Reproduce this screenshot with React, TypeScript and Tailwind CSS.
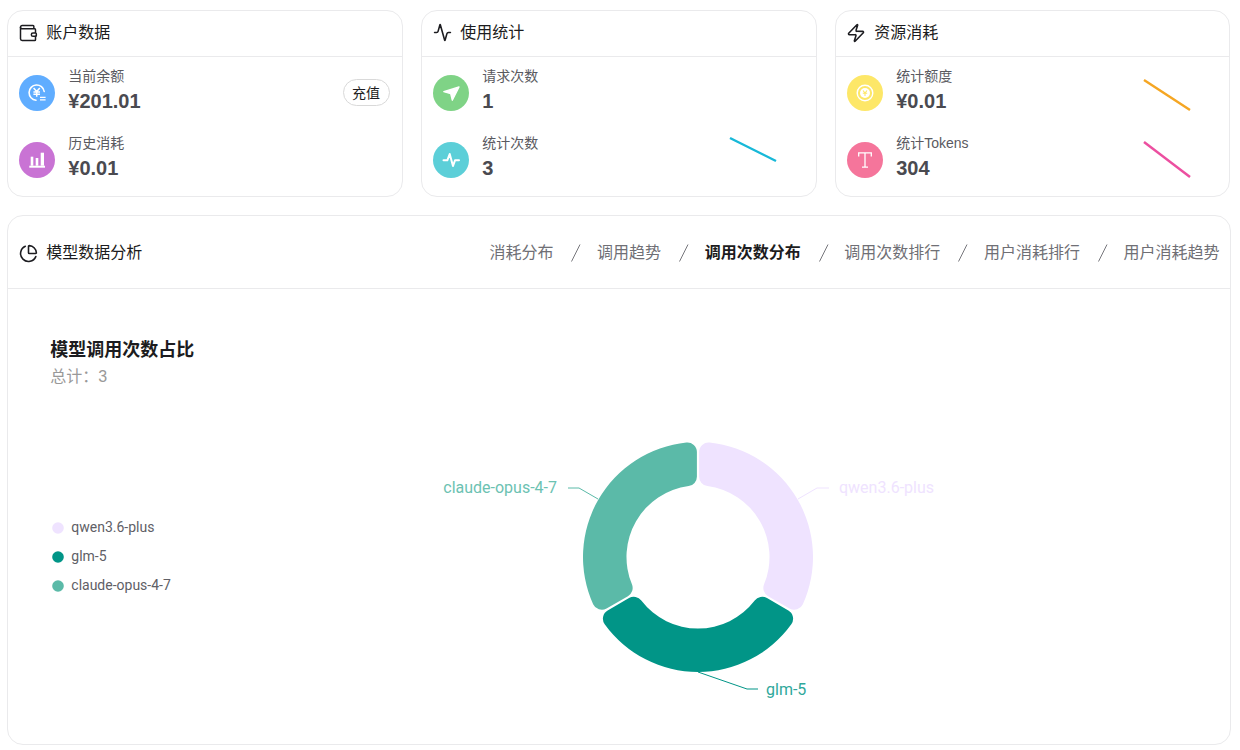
import { Activity, ChartPie, Wallet, Zap } from "lucide-react";
import type { ReactNode } from "react";

const CX = 230;
const CY = 142;
const OUTER = 115;
const INNER = 71.5;
const CORNER = 9.5;
const GAP = 1.1;

function polar(radius: number, angle: number) {
  return `${(CX + radius * Math.sin(angle)).toFixed(2)} ${(CY - radius * Math.cos(angle)).toFixed(2)}`;
}

function onEdge(along: number, angle: number, offset: number) {
  const x = CX + along * Math.sin(angle) + offset * Math.cos(angle);
  const y = CY - along * Math.cos(angle) + offset * Math.sin(angle);
  return `${x.toFixed(2)} ${y.toFixed(2)}`;
}

// rounded donut slice, angles in degrees clockwise from the top
function slice(from: number, to: number) {
  const a0 = (from * Math.PI) / 180;
  const a1 = (to * Math.PI) / 180;
  const po = OUTER - CORNER;
  const pi = INNER + CORNER;
  const dOut = Math.asin((CORNER + GAP) / po);
  const dIn = Math.asin((CORNER + GAP) / pi);
  const c = `A${CORNER} ${CORNER} 0 0 1`;
  return [
    `M${onEdge(po * Math.cos(dOut), a0, GAP)}`,
    `${c} ${polar(OUTER, a0 + dOut)}`,
    `A${OUTER} ${OUTER} 0 0 1 ${polar(OUTER, a1 - dOut)}`,
    `${c} ${onEdge(po * Math.cos(dOut), a1, -GAP)}`,
    `L${onEdge(pi * Math.cos(dIn), a1, -GAP)}`,
    `${c} ${polar(INNER, a1 - dIn)}`,
    `A${INNER} ${INNER} 0 0 0 ${polar(INNER, a0 + dIn)}`,
    `${c} ${onEdge(pi * Math.cos(dIn), a0, GAP)}`,
    "Z",
  ].join(" ");
}

const models = [
  { name: "qwen3.6-plus", color: "#efe3ff", from: 0, to: 120 },
  { name: "glm-5", color: "#019587", from: 120, to: 240 },
  { name: "claude-opus-4-7", color: "#5bbaa8", from: 240, to: 360 },
];

const tabs = ["消耗分布", "调用趋势", "调用次数分布", "调用次数排行", "用户消耗排行", "用户消耗趋势"];

function YuanSwapIcon() {
  return (
    <svg viewBox="0 0 20 20" className="w-[20px] h-[20px]" fill="none" stroke="white">
      <path d="M17.2 8.5A7.6 7.6 0 1 0 9 17.2" strokeWidth="1.6" strokeLinecap="round" />
      <path d="M6.6 5 9.7 8.6 12.8 5M6.4 9h6.6M6.4 11.3h6.6M9.7 8.6v5.2" strokeWidth="1.5" />
      <path d="M13 14.3h5.6M13 16.9h5.6" strokeWidth="1.3" />
    </svg>
  );
}

function BarsIcon() {
  return (
    <svg viewBox="0 0 20 20" className="w-[20px] h-[20px]" fill="white">
      <rect x="2.3" y="15.7" width="15.7" height="2" />
      <rect x="3.7" y="6.7" width="2.6" height="9" />
      <rect x="8.7" y="8" width="2.6" height="7.7" />
      <rect x="13.7" y="2.7" width="3.3" height="13" />
    </svg>
  );
}

function PlaneIcon() {
  return (
    <svg viewBox="0 0 20 20" className="w-[20px] h-[20px]" fill="white" stroke="white" strokeWidth="1.4" strokeLinejoin="round">
      <path d="M2.8 8.7 18 4 11.3 17.2 9.7 10.7Z" />
    </svg>
  );
}

function PulseIcon() {
  return (
    <svg viewBox="0 0 20 20" className="w-[20px] h-[20px]" fill="none" stroke="white" strokeWidth="2" strokeLinecap="round" strokeLinejoin="round">
      <path d="M2.5 10.3H6.3L8.7 4 12 16 14 10.3H18" />
    </svg>
  );
}

function CoinIcon() {
  return (
    <svg viewBox="0 0 20 20" className="w-[20px] h-[20px]" fill="none" stroke="white">
      <circle cx="10" cy="10" r="7.8" strokeWidth="1.4" />
      <circle cx="10" cy="10" r="5" fill="white" stroke="none" />
      <path d="M8 7.5 10 10l2-2.5M7.8 10.3h4.4M10 10v3" stroke="#fde768" strokeWidth="1.1" />
    </svg>
  );
}

function SerifTIcon() {
  return (
    <svg viewBox="0 0 20 20" className="w-[20px] h-[20px]" fill="none" stroke="white" strokeWidth="1.3">
      <path d="M3.7 6.5V2.8h12.6v3.7M10 2.8v14.4M7 17.2h6" />
    </svg>
  );
}

function Stat({ icon, color, label, value, right }: { icon: ReactNode; color: string; label: string; value: string; right?: ReactNode }) {
  return (
    <div className="flex items-start h-[36px]">
      <div className={`w-[36px] h-[36px] rounded-full flex items-center justify-center shrink-0 ${color}`}>{icon}</div>
      <div className="ml-[13px]">
        <div className="text-[14px] leading-[20px] text-[#5a5a5f] -mt-[9px]">{label}</div>
        <div className="text-[20px] leading-[28px] font-bold text-[#4a4a50] mt-[1px]">{value}</div>
      </div>
      {right && <div className="ml-auto">{right}</div>}
    </div>
  );
}

function Spark({ color, y1, y2 }: { color: string; y1: number; y2: number }) {
  return (
    <svg width="46" height="36" className="mr-[27.5px] overflow-visible">
      <line x1="0" y1={y1} x2="46" y2={y2} stroke={color} strokeWidth="2.4" />
    </svg>
  );
}

function Header({ icon, title }: { icon: ReactNode; title: string }) {
  return (
    <div className="flex items-center text-[16px] text-[#1c1c20]">
      <div className="w-[18px] flex justify-center shrink-0 mr-[9px]">{icon}</div>
      <span>{title}</span>
    </div>
  );
}

function Card({ icon, title, children }: { icon: ReactNode; title: string; children: ReactNode }) {
  return (
    <div className="h-[186.5px] bg-white border border-[#eaeaec] rounded-[16px] overflow-hidden">
      <div className="h-[46px] border-b border-[#eaeaec] flex items-center pl-[11px] pb-[2px]">
        <Header icon={icon} title={title} />
      </div>
      <div className="pl-[11px] pr-[12px] pt-[18px] flex flex-col gap-[31px]">{children}</div>
    </div>
  );
}

export default function App() {
  return (
    <div className="w-[1240px] h-[750px] bg-white pl-[7.3px] pr-[9.5px] pt-[10px] font-['Liberation_Sans','Noto_Sans_CJK_SC',sans-serif] overflow-hidden">
      <div className="grid grid-cols-3 gap-[18.7px]">
        <Card icon={<Wallet size={20} strokeWidth={1.8} className="shrink-0" />} title="账户数据">
          <Stat
            icon={<YuanSwapIcon />}
            color="bg-[#60adff]"
            label="当前余额"
            value="¥201.01"
            right={
              <button className="mt-[4px] h-[27px] w-[47px] pt-[2px] rounded-full border border-[#d9d9d9] text-[14px] text-[#1c1c20] flex items-center justify-center">
                充值
              </button>
            }
          />
          <Stat icon={<BarsIcon />} color="bg-[#c973d4]" label="历史消耗" value="¥0.01" />
        </Card>
        <Card icon={<Activity size={19} strokeWidth={2} className="shrink-0" />} title="使用统计">
          <Stat icon={<PlaneIcon />} color="bg-[#7fd386]" label="请求次数" value="1" />
          <Stat icon={<PulseIcon />} color="bg-[#5ccfd8]" label="统计次数" value="3" right={<Spark color="#17b8d8" y1={-4} y2={19} />} />
        </Card>
        <Card icon={<Zap size={20} strokeWidth={1.9} className="shrink-0" />} title="资源消耗">
          <Stat icon={<CoinIcon />} color="bg-[#fde768]" label="统计额度" value="¥0.01" right={<Spark color="#f5a623" y1={5} y2={35} />} />
          <Stat icon={<SerifTIcon />} color="bg-[#f5759b]" label="统计Tokens" value="304" right={<Spark color="#ec4fa0" y1={0} y2={35} />} />
        </Card>
      </div>

      <div className="mt-[18.7px] h-[529.5px] bg-white border border-[#eaeaec] rounded-[16px] overflow-hidden">
        <div className="h-[73px] border-b border-[#eaeaec] flex items-center justify-between pl-[11px] pr-[10px] pt-[2px]">
          <Header icon={<ChartPie size={19} strokeWidth={2} className="shrink-0" />} title="模型数据分析" />
          <div className="flex items-center text-[16px] text-[#6f6f75]">
            {tabs.map((tab, i) => (
              <div key={tab} className="flex items-center">
                {i > 0 && (
                  <svg width="43.6" height="18" className="shrink-0" fill="none">
                    <path d="M27 0.5 18.5 17.5" stroke="#77777c" strokeWidth="1" />
                  </svg>
                )}
                <span className={tab === "调用次数分布" ? "font-bold text-[#1c1c20]" : ""}>{tab}</span>
              </div>
            ))}
          </div>
        </div>

        <div className="pl-[42px] pt-[47px]">
          <div className="text-[18px] leading-[28px] font-bold text-[#1c1c20]">模型调用次数占比</div>
          <div className="text-[16px] leading-[24px] text-[#999999] mt-[1px]">总计：3</div>
          <div className="flex mt-[26px]">
            <div className="w-[418px] pt-[103px] flex flex-col gap-[10px] text-[14px] leading-[19px] text-[#606066] font-['Roboto',sans-serif]">
              {models.map((m) => (
                <div key={m.name} className="flex items-center gap-[7px] pl-[2px]">
                  <svg width="12" height="12" className="shrink-0">
                    <circle cx="6" cy="6" r="5.8" fill={m.color} />
                  </svg>
                  <span>{m.name}</span>
                </div>
              ))}
            </div>
            <svg width="520" height="300" className="overflow-visible font-['Roboto',sans-serif] text-[16px] shrink-0" fill="none">
              {models.map((m) => (
                <path key={m.name} d={slice(m.from, m.to)} fill={m.color} />
              ))}
              <path d="M330 84 349 73H361" stroke="#efe3ff" strokeWidth="1" />
              <text x="371" y="77.5" fill="#efe3ff">qwen3.6-plus</text>
              <path d="M230 257 279 274H290" stroke="#019587" strokeWidth="1" />
              <text x="298" y="279.5" fill="#2fa89b">glm-5</text>
              <path d="M130 84 111 73H100" stroke="#5bbaa8" strokeWidth="1" />
              <text x="89" y="77.5" textAnchor="end" fill="#6cc2b2">claude-opus-4-7</text>
            </svg>
          </div>
        </div>
      </div>
    </div>
  );
}
